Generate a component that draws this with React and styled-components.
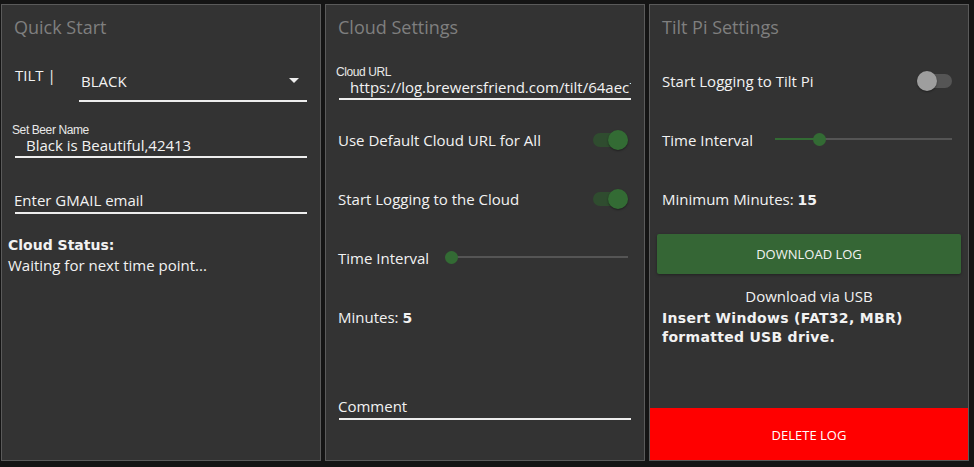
import styled, { createGlobalStyle } from 'styled-components'

const GlobalStyle = createGlobalStyle`
  html, body {
    margin: 0;
    padding: 0;
    background: #141414;
  }
  body {
    font-family: 'Open Sans', 'Noto Sans', sans-serif;
    color: #f2f2f2;
  }
`

const Toggle = ({ on }) => (
  <Switch>
    <SwitchTrack on={on ? 1 : 0} />
    <SwitchThumb on={on ? 1 : 0} />
  </Switch>
)

const Slider = ({ value }) => (
  <SliderRoot>
    <SliderRail />
    <SliderFill style={{ width: `${value}%` }} />
    <SliderThumb style={{ left: `${value}%` }} />
  </SliderRoot>
)

const App = () => {
  return (
    <>
      <GlobalStyle />
      <Page>
        <Panel>
          <Title>Quick Start</Title>
          <TiltRow>
            <TiltLabel>TILT |</TiltLabel>
            <Select>
              <span>BLACK</span>
              <Caret />
            </Select>
          </TiltRow>
          <Field top={22}>
            <SmallLabel>Set Beer Name</SmallLabel>
            <FieldValue indent>Black is Beautiful,42413</FieldValue>
          </Field>
          <Field top={33}>
            <FieldValue>Enter GMAIL email</FieldValue>
          </Field>
          <Status>
            <strong>Cloud Status:</strong>
            <div>Waiting for next time point...</div>
          </Status>
        </Panel>

        <Panel>
          <Title>Cloud Settings</Title>
          <Field top={17}>
            <SmallLabel>Cloud URL</SmallLabel>
            <FieldValue indent>https://log.brewersfriend.com/tilt/64aec7b1d2e5</FieldValue>
          </Field>
          <Rows top={10}>
            <Row>
              <span>Use Default Cloud URL for All</span>
              <Toggle on />
            </Row>
            <Row>
              <span>Start Logging to the Cloud</span>
              <Toggle on />
            </Row>
            <Row>
              <span>Time Interval</span>
              <Slider value={0} />
            </Row>
            <Row>
              <span>Minutes: <Bold>5</Bold></span>
            </Row>
          </Rows>
          <Field top={51}>
            <FieldValue>Comment</FieldValue>
          </Field>
        </Panel>

        <Panel>
          <Title>Tilt Pi Settings</Title>
          <Rows top={2}>
            <Row>
              <span>Start Logging to Tilt Pi</span>
              <Toggle />
            </Row>
            <Row>
              <span>Time Interval</span>
              <Slider value={25} />
            </Row>
            <Row>
              <span>Minimum Minutes: <Bold>15</Bold></span>
            </Row>
          </Rows>
          <DownloadButton>DOWNLOAD LOG</DownloadButton>
          <UsbTitle>Download via USB</UsbTitle>
          <UsbNote>Insert Windows (FAT32, MBR) formatted USB drive.</UsbNote>
          <DeleteButton>DELETE LOG</DeleteButton>
        </Panel>
      </Page>
    </>
  )
}

export default App

const Page = styled.div`
  display: flex;
  gap: 4px;
  padding: 4px 0 0 1px;
  height: 467px;
  box-sizing: border-box;
`

const Panel = styled.section`
  width: 320px;
  height: 457px;
  box-sizing: border-box;
  background: #333333;
  border: 1px solid #5a5a5a;
  padding: 0 13px;
  display: flex;
  flex-direction: column;
  font-size: 15px;
  overflow: hidden;
`

const Title = styled.h2`
  margin: 0 0 0 -1px;
  height: 44px;
  display: flex;
  align-items: center;
  font-size: 18px;
  font-weight: 400;
  color: #7f7f7f;
`

const TiltRow = styled.div`
  display: flex;
  height: 53px;
`

const TiltLabel = styled.div`
  padding-top: 17px;
  line-height: 18px;
  width: 64px;
`

const Select = styled.div`
  flex: 1;
  display: flex;
  align-items: flex-end;
  justify-content: space-between;
  border-bottom: 2px solid #eeeeee;
  padding: 0 8px 10px 2px;
  line-height: 18px;
`

const Caret = styled.span`
  width: 0;
  height: 0;
  border-left: 5px solid transparent;
  border-right: 5px solid transparent;
  border-top: 5px solid #eeeeee;
  margin-bottom: 7px;
`

const Field = styled.div`
  margin-top: ${p => p.top}px;
  border-bottom: 2px solid #eeeeee;
  padding-bottom: 3px;
`

const SmallLabel = styled.div`
  margin-left: -3px;
  font-family: 'Liberation Sans', Arial, sans-serif;
  font-size: 12px;
  line-height: 13px;
  letter-spacing: -0.4px;
  color: #e8e8e8;
`

const FieldValue = styled.div`
  padding-left: ${p => (p.indent ? 12 : 0)}px;
  margin-left: -1px;
  line-height: ${p => (p.indent ? 16 : 18)}px;
  white-space: nowrap;
  overflow-x: clip;
  overflow-y: visible;
`

const Status = styled.div`
  margin: 20px -6px 0 -7px;
  line-height: 20px;

  strong {
    font-family: 'DejaVu Sans', Verdana, sans-serif;
    font-size: 14px;
  }
`

const Rows = styled.div`
  margin: ${p => p.top}px 0 0 -1px;
  display: flex;
  flex-direction: column;
`

const Row = styled.div`
  height: 59px;
  display: flex;
  align-items: center;
  justify-content: space-between;
`

const Bold = styled.b`
  font-family: 'DejaVu Sans', Verdana, sans-serif;
  font-size: 14px;
`

const Switch = styled.div`
  position: relative;
  width: 35px;
  height: 20px;
  margin-right: 3px;
  flex: none;
`

const SwitchTrack = styled.div`
  position: absolute;
  left: 0;
  right: 0;
  top: 3px;
  height: 14px;
  border-radius: 7px;
  background: ${p => (p.on ? '#2f4c2f' : '#555555')};
`

const SwitchThumb = styled.div`
  position: absolute;
  top: 0;
  left: ${p => (p.on ? '15px' : '0')};
  width: 20px;
  height: 20px;
  border-radius: 50%;
  background: ${p => (p.on ? '#336b34' : '#9e9e9e')};
  box-shadow: 0 1px 2px rgba(0, 0, 0, 0.4);
`

const SliderRoot = styled.div`
  position: relative;
  width: 177px;
  height: 13px;
  margin-right: 3px;
  flex: none;
`

const SliderRail = styled.div`
  position: absolute;
  left: 0;
  right: 0;
  top: 5px;
  height: 2px;
  background: #555555;
`

const SliderFill = styled.div`
  position: absolute;
  left: 0;
  top: 5px;
  height: 2px;
  background: #336b34;
`

const SliderThumb = styled.div`
  position: absolute;
  top: 0;
  width: 13px;
  height: 13px;
  margin-left: -6.5px;
  border-radius: 50%;
  background: #336b34;
`

const DownloadButton = styled.div`
  margin: 6px -6px 0;
  height: 40px;
  border-radius: 2px;
  background: #356635;
  box-shadow: 0 1px 3px rgba(0, 0, 0, 0.35);
  display: flex;
  align-items: center;
  justify-content: center;
  font-size: 13px;
`

const UsbTitle = styled.div`
  margin-top: 12px;
  line-height: 20px;
  text-align: center;
`

const UsbNote = styled.div`
  margin: 3px 0 0 -1px;
  line-height: 19px;
  font-family: 'DejaVu Sans', Verdana, sans-serif;
  font-size: 14px;
  font-weight: 700;
  letter-spacing: 0.3px;
  width: 260px;
`

const DeleteButton = styled.div`
  margin: auto -13px -1px;
  height: 53px;
  background: #ff0000;
  display: flex;
  align-items: center;
  justify-content: center;
  font-size: 13px;
  color: #ffffff;
`
